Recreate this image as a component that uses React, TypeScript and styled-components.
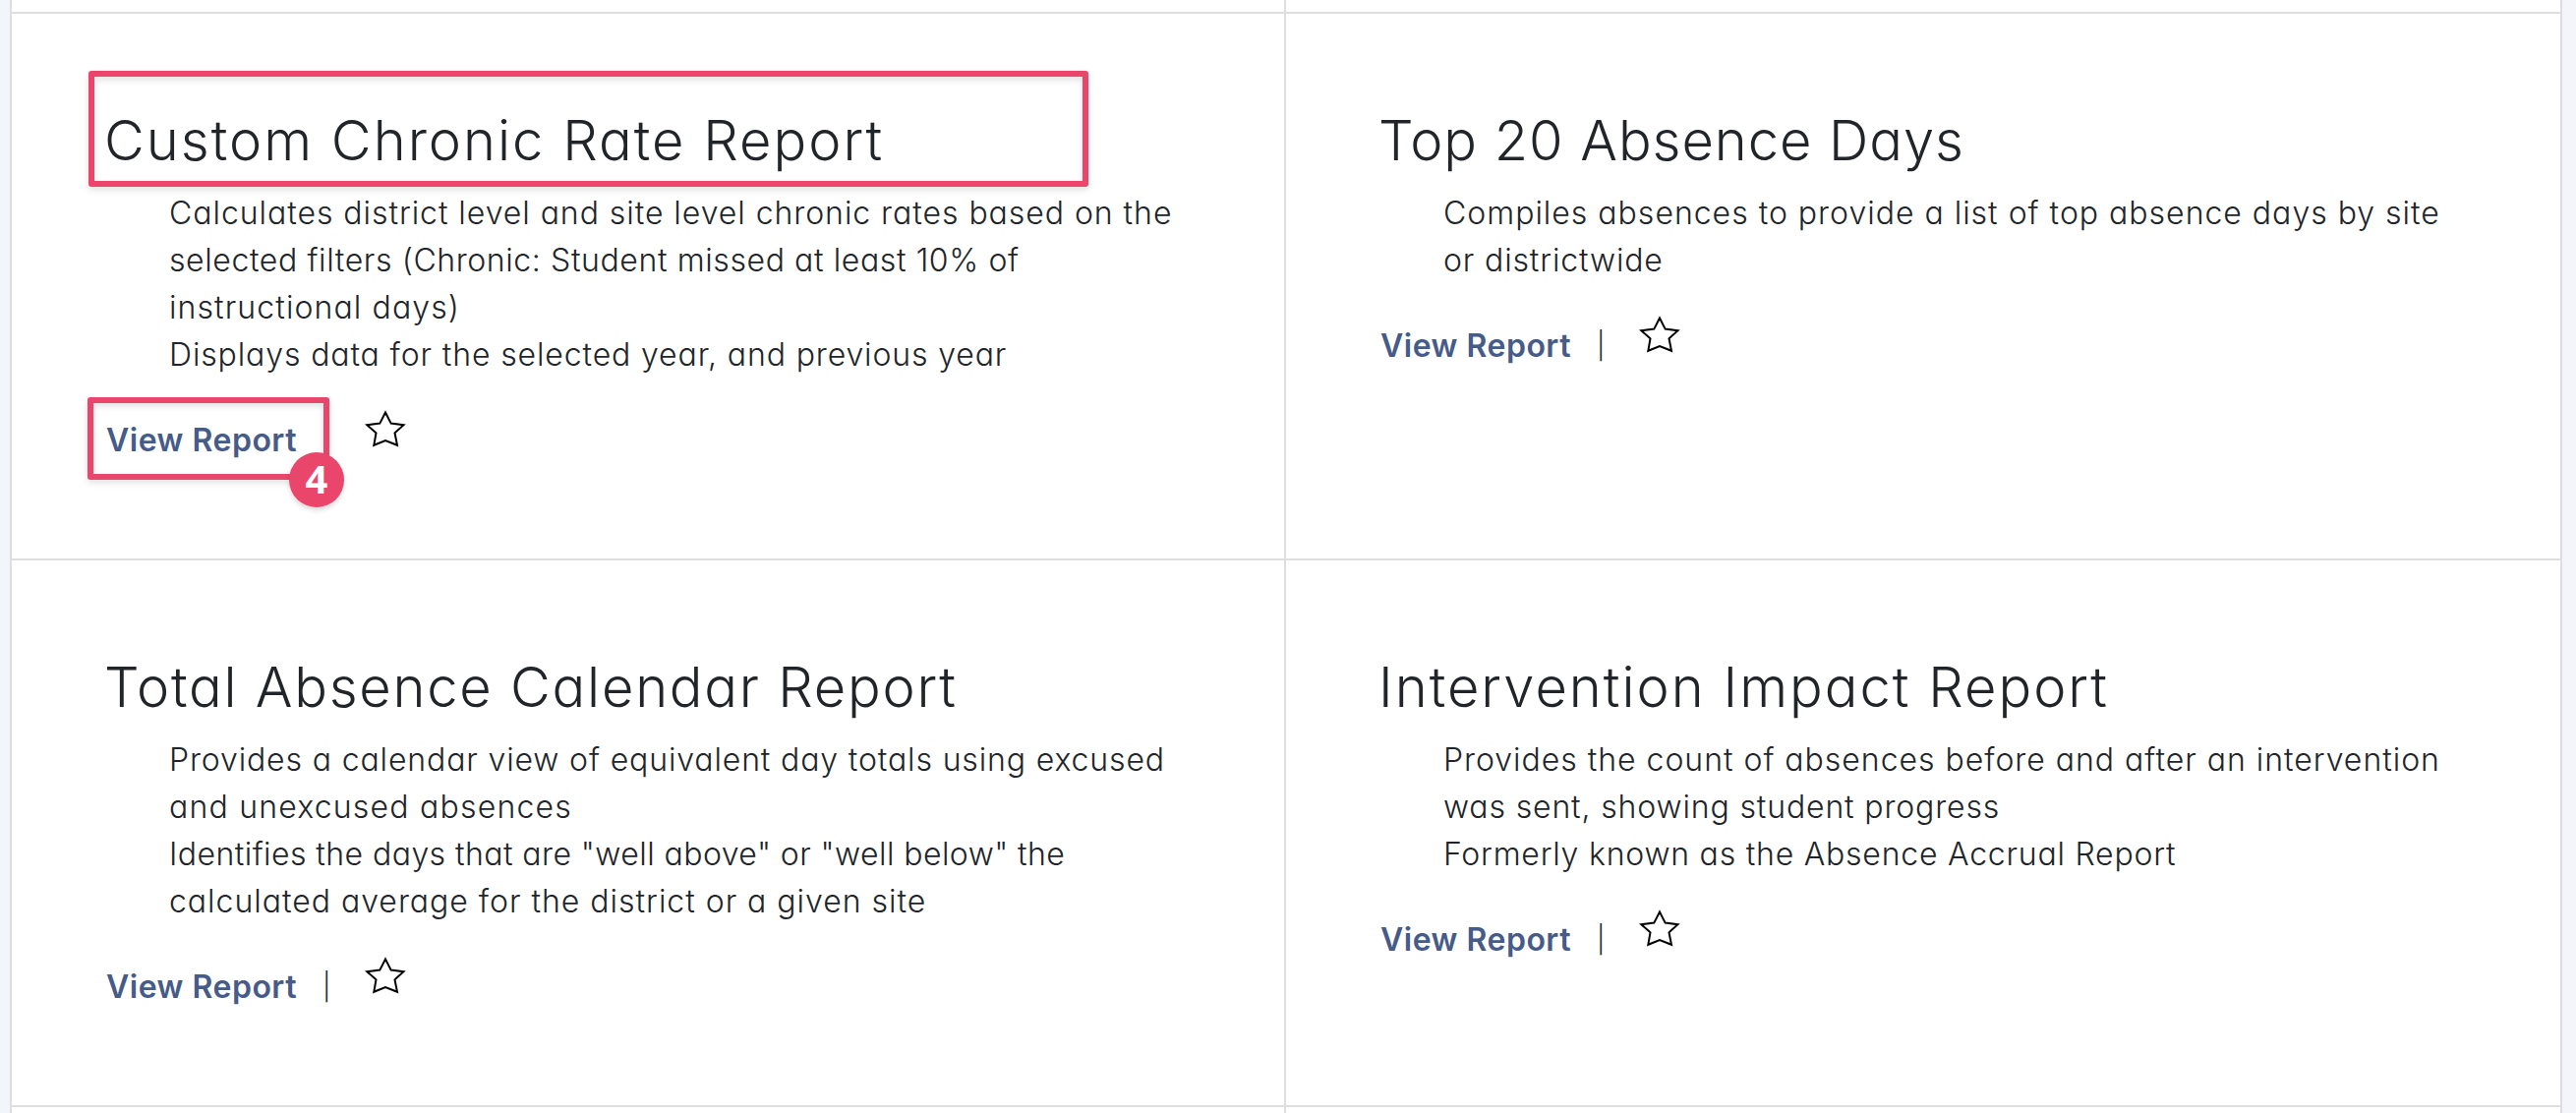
import React from 'react';
import styled, { createGlobalStyle } from 'styled-components';

const GlobalStyle = createGlobalStyle`
    *{
        box-sizing: border-box;
    }

    body{
        margin: 0;
        background-color: #F2F6FB;
        color: #212529;
        font-family: 'Inter', 'Liberation Sans', sans-serif;
        font-feature-settings: 'cv11';
    }
`

const Page = styled.main`
    height: 1132px;
    overflow: hidden;
    padding: 0 14px 0 10px;
`

const Panel = styled.section`
    display: grid;
    grid-template-columns: 1296px 1296px;
    grid-template-rows: 14px 556px 556px 6px;
    background-color: #FFFFFF;
    border: solid #DEDEDE;
    border-width: 0 2px;
`

const Cell = styled.article`
    position: relative;
    padding: 96px 96px 0;
    border-bottom: 2px solid #DEDEDE;

    &:nth-child(odd){
        border-right: 2px solid #DEDEDE;
    }
`

const EdgeCell = styled(Cell)`
    padding: 0;

    &:nth-last-child(-n + 2){
        border-bottom: none;
    }
`

const Title = styled.h2<{ spacing: number }>`
    margin: 0 0 17px -2px;
    font-size: 56px;
    font-weight: 300;
    line-height: 66px;
    letter-spacing: ${props => props.spacing}px;
    white-space: nowrap;
`

const Description = styled.ul`
    list-style: none;
    margin: 0 0 39px;
    padding: 0 0 0 64px;
    font-size: 32px;
    font-weight: 300;
    line-height: 48px;
`

const Line = styled.span<{ spacing: number }>`
    display: block;
    letter-spacing: ${props => props.spacing}px;
    white-space: nowrap;
`

const Actions = styled.div`
    display: flex;
    height: 48px;
    line-height: 48px;
    font-size: 32px;

    .actions__link{
        width: 220px;
        color: #465B87;
        font-weight: 600;
        letter-spacing: 0.5px;
        text-decoration: none;
    }

    .actions__divider{
        width: 42px;
        font-size: 27px;
        font-weight: 300;
    }

    .actions__favorite{
        width: 44px;
        height: 40px;
        margin-top: -8px;
        padding: 0;
        border: none;
        background-color: transparent;
        cursor: pointer;
    }

    svg{
        display: block;
    }
`

const Highlight = styled.div<{ x: number, y: number, width: number, height: number }>`
    position: absolute;
    left: ${props => props.x}px;
    top: ${props => props.y}px;
    width: ${props => props.width}px;
    height: ${props => props.height}px;
    border: 6px solid #EA456B;
    border-radius: 3px;
    filter: drop-shadow(0 3px 3px rgba(0, 0, 0, 0.13));
    pointer-events: none;
`

const StepBadge = styled.div`
    position: absolute;
    left: 282px;
    top: 446px;
    width: 56px;
    height: 56px;
    border-radius: 50%;
    background-color: #EA456B;
    box-shadow: 0 3px 5px rgba(0, 0, 0, 0.15);
    color: #FFFFFF;
    font-family: 'Noto Sans', sans-serif;
    font-size: 40px;
    font-weight: 700;
    line-height: 53px;
    text-align: center;
`

interface TextLine {
    text: string,
    spacing: number,
}

interface Report {
    title: string,
    spacing: number,
    items: Array<TextLine[]>,
    step?: number,
}

const reports: Report[] = [
    {
        title: 'Custom Chronic Rate Report',
        spacing: 2.02,
        step: 4,
        items: [
            [
                { text: 'Calculates district level and site level chronic rates based on the', spacing: 0.95 },
                { text: 'selected filters (Chronic: Student missed at least 10% of', spacing: 0.6 },
                { text: 'instructional days)', spacing: 1.1 },
            ],
            [{ text: 'Displays data for the selected year, and previous year', spacing: 0.87 }],
        ],
    },
    {
        title: 'Top 20 Absence Days',
        spacing: 0.95,
        items: [
            [
                { text: 'Compiles absences to provide a list of top absence days by site', spacing: 0.99 },
                { text: 'or districtwide', spacing: 0.85 },
            ],
        ],
    },
    {
        title: 'Total Absence Calendar Report',
        spacing: 1.76,
        items: [
            [
                { text: 'Provides a calendar view of equivalent day totals using excused', spacing: 0.86 },
                { text: 'and unexcused absences', spacing: 1.2 },
            ],
            [
                { text: 'Identifies the days that are "well above" or "well below" the', spacing: 0.43 },
                { text: 'calculated average for the district or a given site', spacing: 0.98 },
            ],
        ],
    },
    {
        title: 'Intervention Impact Report',
        spacing: 2,
        items: [
            [
                { text: 'Provides the count of absences before and after an intervention', spacing: 0.97 },
                { text: 'was sent, showing student progress', spacing: 0.85 },
            ],
            [{ text: 'Formerly known as the Absence Accrual Report', spacing: 0.77 }],
        ],
    },
];

const StarIcon: React.FunctionComponent = () => (
    <svg width='44' height='40' viewBox='0 0 44 40' fill='none' stroke='#000000' strokeWidth='2'>
        <path d='M22 3.5L27.7 14.6L40.5 16.2L31.5 24.3L34 36.8L22 32L10.3 36.8L12.5 24.3L3.3 16.2L16.3 14.6Z' />
    </svg>
)

const ReportCard: React.FunctionComponent<Report> = ({ title, spacing, items, step }) => {
    return (
        <Cell>
            <Title spacing={spacing}>{title}</Title>
            <Description>
                {items.map((lines, i) => (
                    <li key={i}>
                        {lines.map(line => (
                            <Line key={line.text} spacing={line.spacing}>{line.text}</Line>
                        ))}
                    </li>
                ))}
            </Description>
            <Actions>
                <a href='#report' className='actions__link'>View Report</a>
                <span className='actions__divider'>|</span>
                <button className='actions__favorite' aria-label='Add to favorites'><StarIcon /></button>
            </Actions>
            {step &&
                <>
                    <Highlight x={78} y={58} width={1017} height={118} />
                    <Highlight x={77} y={390} width={246} height={84} />
                    <StepBadge>{step}</StepBadge>
                </>}
        </Cell>
    )
}

const App: React.FunctionComponent = () => {
    return (
        <>
            <GlobalStyle />
            <Page>
                <Panel>
                    <EdgeCell />
                    <EdgeCell />
                    {reports.map(report => <ReportCard key={report.title} {...report} />)}
                    <EdgeCell />
                    <EdgeCell />
                </Panel>
            </Page>
        </>
    )
}

export default App;
